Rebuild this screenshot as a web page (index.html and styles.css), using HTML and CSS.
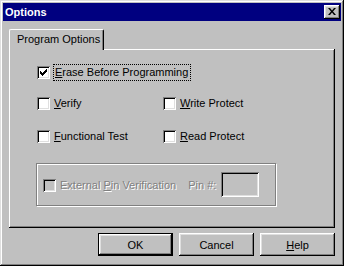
FILE: index.html
```html
<!DOCTYPE html>
<html lang="en">
<head>
    <meta charset="UTF-8">
    <title>Options</title>
    <link rel="stylesheet" href="styles.css">
</head>
<body>
    <div class="window">
        <div class="titlebar">
            <span class="title">Options</span>
            <span class="close">
                <svg width="8" height="7" viewBox="0 0 8 7"><path d="M0 0h2l2 2.5 2-2.5h2l-3 3.5 3 3.5h-2l-2-2.5-2 2.5h-2l3-3.5z" fill="#000"/></svg>
            </span>
        </div>
        <div class="body">
            <div class="tabs">
                <div class="tab">Program Options</div>
            </div>
            <div class="panel">
                <div class="row first">
                    <span class="box">
                        <svg width="7" height="7" viewBox="0 0 7 7"><path d="M0 2h1v1h1v1h1v-1h1v-1h1v-1h1v-1h1v3h-1v1h-1v1h-1v1h-1v1h-1v-1h-1v-1h-1z" fill="#000"/></svg>
                    </span>
                    <span class="label focus"><u>E</u>rase Before Programming</span>
                </div>
                <div class="grid">
                    <div class="row"><span class="box"></span><span class="label"><u>V</u>erify</span></div>
                    <div class="row"><span class="box"></span><span class="label"><u>W</u>rite Protect</span></div>
                    <div class="row"><span class="box"></span><span class="label"><u>F</u>unctional Test</span></div>
                    <div class="row"><span class="box"></span><span class="label"><u>R</u>ead Protect</span></div>
                </div>
                <div class="group">
                    <div class="row disabled">
                        <span class="box"></span>
                        <span class="label">External <u>P</u>in Verification</span>
                    </div>
                    <span class="pin-label">Pin #:</span>
                    <span class="pin-input"></span>
                </div>
            </div>
            <div class="actions">
                <button class="btn default">OK</button>
                <button class="btn">Cancel</button>
                <button class="btn"><u>H</u>elp</button>
            </div>
        </div>
    </div>
</body>
</html>
```

FILE: styles.css
```css
* {
    box-sizing: border-box;
}
body {
    margin: 0;
    font-family: "Liberation Sans", Arial, sans-serif;
    font-size: 11px;
    color: #000;
    background: #c0c0c0;
}
.window {
    width: 344px;
    height: 266px;
    padding: 3px;
    background: #c0c0c0;
    box-shadow: inset -1px -1px #000, inset 1px 1px #dfdfdf, inset -2px -2px #808080, inset 2px 2px #fff;
    display: flex;
    flex-direction: column;
}
.titlebar {
    height: 18px;
    background: #000080;
    display: flex;
    align-items: center;
    justify-content: space-between;
    padding: 0 1px 0 2px;
}
.title {
    color: #fff;
    font-weight: bold;
    font-size: 11px;
}
.close {
    width: 16px;
    height: 14px;
    background: #c0c0c0;
    box-shadow: inset -1px -1px #000, inset 1px 1px #fff, inset -2px -2px #808080, inset 2px 2px #dfdfdf;
    display: flex;
    align-items: center;
    justify-content: center;
    padding: 0 1px 1px 0;
}
.close svg, .box svg {
    display: block;
}
.body {
    flex: 1;
    display: flex;
    flex-direction: column;
    padding: 8px 6px 7px 6px;
}
.tabs {
    display: flex;
    height: 20px;
    position: relative;
    z-index: 1;
}
.tab {
    width: 95px;
    height: 21px;
    background: #c0c0c0;
    border-top: 1px solid #fff;
    border-left: 1px solid #fff;
    border-right: 1px solid #000;
    border-radius: 2px 2px 0 0;
    box-shadow: inset -1px 0 #808080;
    padding: 3px 0 0 7px;
    line-height: 13px;
}
.panel {
    height: 179px;
    box-shadow: inset -1px -1px #000, inset 1px 1px #fff, inset -2px -2px #808080;
    padding: 17px 0 0 28px;
    display: flex;
    flex-direction: column;
    align-items: flex-start;
}
.row {
    display: flex;
    align-items: center;
    height: 13px;
}
.box {
    width: 13px;
    height: 13px;
    flex: none;
    background: #fff;
    box-shadow: inset 1px 1px #808080, inset -1px -1px #fff, inset 2px 2px #000, inset -2px -2px #dfdfdf;
    display: flex;
    align-items: center;
    justify-content: center;
}
.label {
    margin-left: 4px;
    line-height: 13px;
    white-space: nowrap;
}
.focus {
    outline: 1px dotted #000;
    outline-offset: 1px;
    margin-left: 5px;
    padding: 0 1px 0 0;
}
.grid {
    display: grid;
    grid-template-columns: 126px auto;
    row-gap: 20px;
    margin-top: 18px;
}
.group {
    flex: none;
    margin: 20px 0 0 -1px;
    width: 240px;
    height: 43px;
    border: 1px solid #808080;
    box-shadow: inset 1px 1px #fff, 1px 1px #fff;
    display: flex;
    align-items: center;
    padding: 1px 0 0 6px;
}
.disabled .box {
    background: #c0c0c0;
}
.disabled .label, .pin-label {
    color: #808080;
    text-shadow: 1px 1px #fff;
}
.pin-label {
    margin-left: 12px;
}
.pin-input {
    flex: none;
    width: 38px;
    height: 25px;
    margin-left: 5px;
    margin-top: -2px;
    box-shadow: inset 1px 1px #808080, inset -1px -1px #fff, inset 2px 2px #000, inset -2px -2px #dfdfdf;
}
.actions {
    display: flex;
    justify-content: flex-end;
    gap: 6px;
    margin-top: 5px;
}
.btn {
    width: 75px;
    height: 23px;
    font: inherit;
    color: #000;
    background: #c0c0c0;
    border: none;
    padding: 0;
    box-shadow: inset -1px -1px #000, inset 1px 1px #fff, inset -2px -2px #808080, inset 2px 2px #dfdfdf;
}
.btn.default {
    border: 1px solid #000;
}
```
